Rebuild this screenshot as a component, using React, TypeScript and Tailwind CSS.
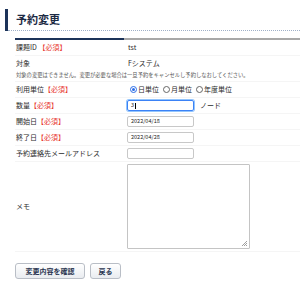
import React from 'react';

const Required = () => <span className="text-[#e8382f]">【必須】</span>;

const Row: React.FC<{ label: React.ReactNode; h?: string; children?: React.ReactNode; border?: boolean }> = ({
    label,
    h = 'h-[16px]',
    children,
    border = true,
}) => (
    <div className={`flex ${h} ${border ? 'border-b border-[#f5f5f5]' : ''}`}>
        <div className="w-[112px] pl-[1px] flex items-center">{label}</div>
        <div className="flex-1 flex items-center">{children}</div>
    </div>
);

const TextInput: React.FC<{ value?: string; focused?: boolean }> = ({ value = '', focused }) => (
    <div
        className={`w-[67px] h-[11px] rounded-[2px] flex items-center px-[3px] text-[5.5px] text-[#222] ${
            focused ? 'border border-[#3b82f6] ring-[1px] ring-[#93c5fd]' : 'border border-[#c8c8c8]'
        }`}
    >
        {value}
        {focused && <span className="w-px h-[6px] bg-black ml-px" />}
    </div>
);

const Radio: React.FC<{ checked?: boolean; label: string }> = ({ checked, label }) => (
    <label className="flex items-center gap-[1px] mr-[4px]">
        <span
            className={`w-[7px] h-[7px] rounded-full flex items-center justify-center border ${
                checked ? 'border-[#2b6de8]' : 'border-[#666]'
            }`}
        >
            {checked && <span className="w-[3.5px] h-[3.5px] rounded-full bg-[#2b6de8]" />}
        </span>
        {label}
    </label>
);

export default function App() {
    return (
        <div className="w-[300px] h-[300px] bg-white text-[#2b2b2b] text-[7px] font-['Noto_Sans_CJK_JP','Noto_Sans',sans-serif] overflow-hidden">
            <div className="pt-[9px] pl-[5px] flex">
                <div className="w-[3px] h-[22px] bg-[#1c3359]" />
                <div className="flex-1 h-[22px] border-b border-dotted border-[#9fb0c8] pl-[8px] flex items-center">
                    <h1 className="text-[11px] font-bold text-[#1c2a44] leading-none">予約変更</h1>
                </div>
            </div>

            <div className="mt-[7px] ml-[15px] flex h-[2px]">
                <div className="w-[109px] bg-[#1c3359]" />
                <div className="flex-1 bg-[#a8a8a8]" />
            </div>

            <div className="ml-[15px]">
                <Row label={<span>課題ID <Required /></span>}>
                    <span className="pl-[1px]">tst</span>
                </Row>
                <Row label="対象" h="h-[14px]" border={false}>
                    <span className="pl-[1px]">Fシステム</span>
                </Row>
                <div className="h-[12px] border-b border-[#f5f5f5] flex items-center pl-[1px] text-[5.3px] text-[#555]">
                    対象の変更はできません。変更が必要な場合は一旦予約をキャンセルし予約しなおしてください。
                </div>
                <Row label={<span>利用単位<Required /></span>}>
                    <div className="flex items-center pl-[3px]">
                        <Radio checked label="日単位" />
                        <Radio label="月単位" />
                        <Radio label="年度単位" />
                    </div>
                </Row>
                <Row label={<span>数量<Required /></span>}>
                    <TextInput value="3" focused />
                    <span className="ml-[6px]">ノード</span>
                </Row>
                <Row label={<span>開始日<Required /></span>}>
                    <TextInput value="2022/04/18" />
                </Row>
                <Row label={<span>終了日<Required /></span>}>
                    <TextInput value="2022/04/28" />
                </Row>
                <Row label="予約連絡先メールアドレス">
                    <TextInput />
                </Row>
                <Row label="メモ" h="h-[90px]">
                    <div className="relative w-[123px] h-[85px] border border-[#c4c4c4] rounded-[1px]">
                        <svg className="absolute right-[1px] bottom-[1px]" width="7" height="7" viewBox="0 0 7 7">
                            <path d="M6 1L1 6M6 3L3 6M6 5L5 6" stroke="#888" strokeWidth="0.8" />
                        </svg>
                    </div>
                </Row>
            </div>

            <div className="ml-[15px] mt-[11px] flex gap-[5px]">
                <button className="w-[70px] h-[16px] rounded-[3px] border border-[#b9bec6] bg-gradient-to-b from-white to-[#e9ecf0] text-[7px] font-bold text-[#2a3550]">
                    変更内容を確認
                </button>
                <button className="w-[31px] h-[16px] rounded-[3px] border border-[#b9bec6] bg-gradient-to-b from-white to-[#e9ecf0] text-[7px] font-bold text-[#2a3550]">
                    戻る
                </button>
            </div>
        </div>
    );
}
